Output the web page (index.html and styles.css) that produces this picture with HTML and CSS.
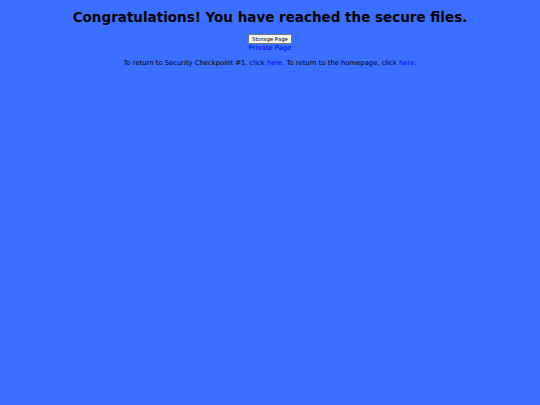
FILE: index.html
```html
<!DOCTYPE html>
<html>
<head>
<meta charset="utf-8">
<link rel="stylesheet" href="styles.css">
</head>
<body>
<div class="page">
  <h1 class="title">Congratulations! You have reached the secure files.</h1>
  <div class="links">
    <button class="btn">Storage Page</button>
    <a class="link" href="#">Private Page</a>
  </div>
  <p class="note">To return to Security Checkpoint #1, click <a class="link" href="#">here.</a> To return to the homepage, click <a class="link" href="#">here.</a></p>
</div>
</body>
</html>
```
FILE: styles.css
```css
html, body {
  margin: 0;
  padding: 0;
  background: #3b6fff;
  height: 100%;
}
.page {
  font-family: "DejaVu Sans", Verdana, sans-serif;
  text-align: center;
  padding-top: 9px;
}
.title {
  margin: 0;
  font-size: 13.5px;
  font-weight: bold;
  color: #000;
  line-height: 16px;
}
.links {
  display: flex;
  flex-direction: column;
  align-items: center;
  margin-top: 9px;
}
.btn {
  font-family: "DejaVu Sans", Verdana, sans-serif;
  font-size: 5.4px;
  padding: 1px 3px;
  background: #f4f4f4;
  border: 1px solid #777;
  border-radius: 1px;
  color: #000;
  line-height: 6px;
}
.link {
  color: #0000ee;
  text-decoration: none;
}
.links .link {
  font-size: 6.8px;
  line-height: 9px;
}
.note {
  margin: 6px 0 0;
  font-size: 6.8px;
  line-height: 9px;
  color: #000;
}
```
